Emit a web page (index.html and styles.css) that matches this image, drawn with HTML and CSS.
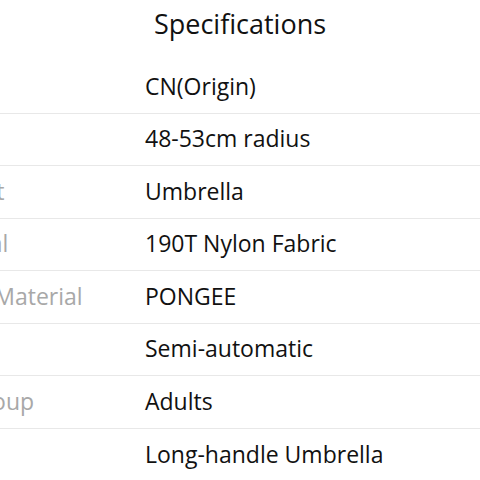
FILE: index.html
```html
<!DOCTYPE html>
<html>
<head>
<meta charset="utf-8">
<link rel="stylesheet" href="styles.css">
</head>
<body>
<div class="page">
  <h2 class="title">Specifications</h2>
  <div class="specs">
    <div class="row"><span class="label">Origin</span><span class="value">CN(Origin)</span></div>
    <div class="row"><span class="label">Size</span><span class="value">48-53cm radius</span></div>
    <div class="row"><span class="label">Product</span><span class="value">Umbrella</span></div>
    <div class="row"><span class="label">Material</span><span class="value">190T Nylon Fabric</span></div>
    <div class="row"><span class="label">Frame Material</span><span class="value">PONGEE</span></div>
    <div class="row"><span class="label">Type</span><span class="value">Semi-automatic</span></div>
    <div class="row"><span class="label">Age Group</span><span class="value">Adults</span></div>
    <div class="row"><span class="label">Handle</span><span class="value">Long-handle Umbrella</span></div>
  </div>
</div>
</body>
</html>
```

FILE: styles.css
```css
html, body {
  margin: 0;
  padding: 0;
  background: #ffffff;
  overflow: hidden;
}
.page {
  width: 480px;
  font-family: "Open Sans", "Liberation Sans", sans-serif;
}
.title {
  margin: 0;
  height: 61px;
  padding-top: 4px;
  box-sizing: border-box;
  text-align: center;
  font-size: 27px;
  font-weight: 400;
  line-height: 40px;
  color: #111111;
}
.specs {
  margin-left: -80px;
  width: 620px;
}
.row {
  display: grid;
  grid-template-columns: 225px 1fr;
  height: 52.5px;
  align-items: center;
  border-bottom: 1px solid #e8e8e8;
  box-sizing: border-box;
  padding-bottom: 2px;
}
.row:last-child {
  border-bottom: none;
}
.label {
  font-size: 23px;
  color: #a8a8a8;
  white-space: nowrap;
}
.value {
  font-size: 23px;
  color: #111111;
  white-space: nowrap;
}
```
